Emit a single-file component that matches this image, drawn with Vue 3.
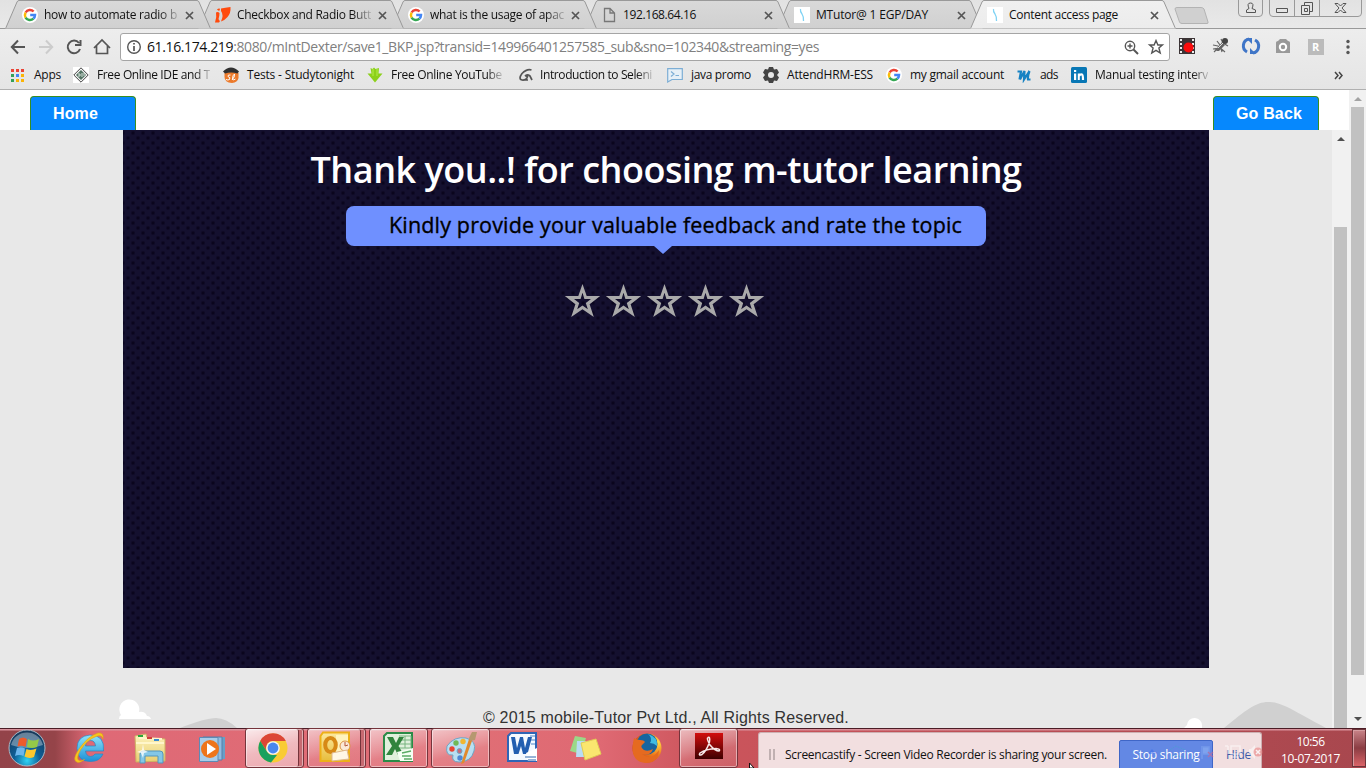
<script setup>
const tabs = [
  { title: 'how to automate radio b', icon: 'google', w: 133, fade: true },
  { title: 'Checkbox and Radio Butt', icon: 'leaf', w: 134, fade: true },
  { title: 'what is the usage of apac', icon: 'google', w: 134, fade: true },
  { title: '192.168.64.16', icon: 'page', w: 73 },
  { title: 'MTutor@ 1 EGP/DAY', icon: 'curve', w: 112 },
  { title: 'Content access page', icon: 'curve', w: 109, active: true },
]
const bookmarks = [
  { title: 'Apps', icon: 'apps', x: 9, gap: 9, w: 27 },
  { title: 'Free Online IDE and T', icon: 'diamond', x: 12, gap: 8, w: 113, fade: true },
  { title: 'Tests - Studytonight', icon: 'study', x: 13, gap: 8, w: 107 },
  { title: 'Free Online YouTube', icon: 'down', x: 13, gap: 8, w: 111, fade: true },
  { title: 'Introduction to Seleni', icon: 'selen', x: 16, gap: 6, w: 112, fade: true },
  { title: 'java promo', icon: 'java', x: 15, gap: 8, w: 60 },
  { title: 'AttendHRM-ESS', icon: 'gear', x: 12, gap: 8, w: 86 },
  { title: 'my gmail account', icon: 'google', x: 13, gap: 8, w: 94 },
  { title: 'ads', icon: 'm', x: 12, gap: 8, w: 18 },
  { title: 'Manual testing interv', icon: 'in', x: 13, gap: 8, w: 113, fade: true },
]
const tasks = [
  { icon: 'start' }, { icon: 'ie' }, { icon: 'folder' }, { icon: 'wmp' },
  { icon: 'chrome', open: true, stack: true, bright: true },
  { icon: 'outlook', open: true, stack: true },
  { icon: 'excel', open: true }, { icon: 'paint', open: true },
  { icon: 'word' }, { icon: 'sticky' }, { icon: 'firefox' }, { icon: 'adobe', open: true },
]
// Spreads a text run to a fixed advance width, whatever the font's own metrics are.
const vFit = (el, { value }) => {
  el.style.letterSpacing = '0px'
  const n = [...el.textContent.trim()].length
  el.style.letterSpacing = (value - el.getBoundingClientRect().width) / n + 'px'
}
</script>

<template>
  <div class="screen">
    <svg class="defs" width="0" height="0">
      <defs>
        <radialGradient id="orb" cx=".5" cy=".85" r=".8"><stop offset="0" stop-color="#2fd3f5" /><stop offset=".45" stop-color="#0e5f97" /><stop offset="1" stop-color="#173a5c" /></radialGradient>
        <linearGradient id="ieg" x1="0" y1="0" x2="0" y2="1"><stop offset="0" stop-color="#8fe4fb" /><stop offset="1" stop-color="#1c8fd6" /></linearGradient>
        <linearGradient id="gold" x1="0" y1="0" x2="0" y2="1"><stop offset="0" stop-color="#fbe9a0" /><stop offset="1" stop-color="#e8bd3c" /></linearGradient>
        <linearGradient id="manila" x1="0" y1="0" x2="0" y2="1"><stop offset="0" stop-color="#fdf3bd" /><stop offset="1" stop-color="#e9cf70" /></linearGradient>
        <linearGradient id="red" x1="0" y1="0" x2="0" y2="1"><stop offset="0" stop-color="#d30d0d" /><stop offset="1" stop-color="#3d0000" /></linearGradient>
        <radialGradient id="fox" cx=".85" cy=".3" r=".9"><stop offset="0" stop-color="#ffe04a" /><stop offset=".5" stop-color="#ee7a1a" /><stop offset="1" stop-color="#c9401b" /></radialGradient>
        <linearGradient id="tabg" x1="0" y1="0" x2="0" y2="1"><stop offset="0" stop-color="#d9d9d9" /><stop offset="1" stop-color="#d0d0d0" /></linearGradient>
        <linearGradient id="taba" x1="0" y1="0" x2="0" y2="1"><stop offset="0" stop-color="#f0f0f0" /><stop offset="1" stop-color="#ececec" /></linearGradient>
        <symbol id="google" viewBox="0 0 16 16"><circle cx="8" cy="8" r="8" fill="#fff" /><g fill="none" stroke-width="2.5"><path d="M3.6 5.5A5 5 0 0 1 11.6 4.5" stroke="#ea4335" /><path d="M3.6 5.5A5 5 0 0 0 3.6 10.5" stroke="#fbbc05" /><path d="M3.6 10.5A5 5 0 0 0 11.4 11.6" stroke="#34a853" /><path d="M11.4 11.6A5 5 0 0 0 13 8.1H8.2" stroke="#4285f4" /></g></symbol>
        <symbol id="leaf" viewBox="0 0 16 16"><path d="M6 1.500Q10 .8 15.500 0Q16 6 12.500 10Q9.500 13.500 6 14.500Q9 8 6 4Z" fill="#ff4a0d" /><path d="M2 2.500Q3.500 1 5 1.700L4.600 3.500Q3 4 2 2.500M1 5.500Q3 4.500 4.500 6Q4.500 9 3.500 12Q4 13.500 5 14L4 15.500H0Q2 10 1 5.500" fill="#ff4a0d" /></symbol>
        <symbol id="page" viewBox="0 0 16 16"><path d="M3.5 1.500H9L13.500 6V14.500H3.500ZM9 1.500V6H13.500" fill="none" stroke="#777" stroke-width="1.3" /></symbol>
        <symbol id="curve" viewBox="0 0 16 16"><path d="M0 0H16V16H0Z" fill="#fff" /><path d="M6.500 2Q6 4.500 8 7Q10 10 9.500 14" fill="none" stroke="#80d3f4" stroke-width="1.3" /></symbol>
        <symbol id="apps" viewBox="0 0 16 16"><path d="M2 2h3v3H2zM7 2h3v3H7zM12 2h3v3h-3z" fill="#ea4335" /><path d="M2 7h3v3H2zM2 12h3v3H2z" fill="#34a058" /><path d="M7 7h3v3H7z" fill="#4285f4" /><path d="M12 7h3v3h-3zM7 12h3v3H7zM12 12h3v3h-3z" fill="#fbb405" /></symbol>
        <symbol id="diamond" viewBox="0 0 16 16"><path d="M0 0H16V16H0Z" fill="#fff" /><path d="M8 .8L15.200 8L8 15.200L.8 8Z" fill="#f4f4f4" stroke="#444" /><path d="M8 3L13 8L8 13L3 8Z" fill="#557565" /><path d="M5 7h2v2H5M9 6v4M11 6v3" stroke="#dce8e0" fill="none" /></symbol>
        <symbol id="study" viewBox="0 0 16 16"><path d="M1.500 6Q8 4 15.500 6V11Q14.500 15.500 9 16Q1.500 15.500 1.500 10Z" fill="#ec7a2b" /><path d="M0 4.500Q4 .5 8 .5Q12 .5 16 4.500L14.500 6.500Q8 4.500 2 6.500Z" fill="#303030" /><path d="M7.500 8Q4.500 7.500 5 9.500Q8 10.500 6.500 12.500Q5 13.500 3 12.500M9 13Q12 10 11.500 7Q9.500 8 9.500 12Q10 14 12.500 12" fill="none" stroke="#fff" stroke-width="1" /></symbol>
        <symbol id="down" viewBox="0 0 16 16"><path d="M3.500 1L5.500 2L7 .5L8.500 2L12 1L11.500 6.500H15.500L8 15.500L.5 6.500H4.500Z" fill="#8cd01b" /><path d="M6 2V9M10 2V9" stroke="#b5ed4b" /></symbol>
        <symbol id="selen" viewBox="0 0 16 16"><path d="M13.500 3Q9 1.500 4 6.500Q0 12 4 13Q8.500 13.500 9.500 9.500Q8 8.500 7 9Q9 6.500 12 9L14 13M4 13H10" fill="none" stroke="#555" stroke-width="1.700" /></symbol>
        <symbol id="java" viewBox="0 0 16 16"><path d="M.7 1.700H15.300V12.500H5L.7 15V12.500ZM4 4.500L7 7L4 9.500M8.500 8.500H12" fill="#e7f0f7" stroke="#7daed5" stroke-width="1.200" /></symbol>
        <symbol id="gear" viewBox="0 0 16 16"><path d="M6 0H10L11 2.500L14 2L16 5.500L14 8L16 10.500L14 14L11 13.500L10 16H6L5 13.500L2 14L0 10.500L2 8L0 5.500L2 2L5 2.500Z" fill="#444" /><circle cx="8" cy="8" r="3" fill="#e7e7e7" /></symbol>
        <symbol id="m" viewBox="0 0 16 16"><path d="M1.500 4.500H5L3.500 12.500M4 12.500L8.500 4L8 12.500L13.500 4Q11.500 9 12 12.500H14.500" fill="none" stroke="#1682c3" stroke-width="2.200" /></symbol>
        <symbol id="in" viewBox="0 0 16 16"><rect width="16" height="16" rx="1.500" fill="#0877b5" /><path d="M3 6.500h2.200V13H3zM3 3h2.200v2H3zM6.800 6.500h2V13h-2z" fill="#fff" /><path d="M8 9Q9 7 11 7.500Q12 8 12 13" fill="none" stroke="#fff" stroke-width="2.200" /></symbol>

        <symbol id="start" viewBox="0 0 40 40"><circle cx="20" cy="20" r="18" fill="url(#orb)" stroke="#aab8c5" stroke-width="1" /><path d="M4 17A16.500 16.500 0 0 1 36 17Q20 23 4 17" fill="#fff" opacity=".35" /><path d="M12 11Q16 8 20 11L18.500 19Q15 17 10.500 18.500Z" fill="#ed5b2c" /><path d="M21 11Q26 14 32 11L30 19Q25 21 20 19Z" fill="#94c947" /><path d="M10 20Q14 18.500 18 20.500L16.500 28Q12 26 8 28Z" fill="#6db6ec" /><path d="M19.500 21Q24 23 29.500 20.500L27 29Q22 31 17.500 28.500Z" fill="#fdc72e" /></symbol>
        <symbol id="ie" viewBox="0 0 40 40"><path d="M34.500 23Q36 7 21 7Q8 8 8 20.500Q8.500 33.500 21.500 33.500Q31 33.500 34 26H26Q24.500 28.500 21.500 28.500Q17 28 16.500 23ZM16.500 18Q17 12.500 21.500 12.500Q26 12.500 26.500 18Z" fill="url(#ieg)" fill-rule="evenodd" stroke="#2686c4" stroke-width=".7" /><path d="M9 34.500Q2 33 10 21Q19 8 29 5Q35 4 34 11Q33 6 27 8.500Q18 12 11.500 22Q6.500 31 10 32.500Q13 33 15.500 31.500Q12 34.500 9 34.500" fill="#f7c51f" stroke="#dfa414" stroke-width=".6" /></symbol>
        <symbol id="folder" viewBox="0 0 40 40"><path d="M4 8L15 6L16 10L34 11V33L5 34Z" fill="url(#manila)" stroke="#ceb264" /><path d="M8 10L31 11M5 15H33" stroke="#fff6cb" stroke-width="2" /><path d="M7 7h5v2H7z" fill="#29a53b" /><path d="M16 9h5v2h-5z" fill="#ce403a" /><path d="M23 11h5v2h-5z" fill="#3a8ad0" /><path d="M9 35V26Q9 23 12 23H29Q32 23 32 26V35H27V28H14V35Z" fill="#83c7e7" stroke="#5296bc" /><path d="M12 16L13 22L17 24L13 25L12 30L10 25L6 24L11 22Z" fill="#fff" opacity=".8" /></symbol>
        <symbol id="wmp" viewBox="0 0 40 40"><path d="M14 9H32V31H14Z" fill="#679fc7" /><path d="M10 9H29V32H10Z" fill="#91bce0" stroke="#577fa8" /><path d="M6.500 9.500H25V33.500H6.500Z" fill="#a9cdea" stroke="#5d8ab5" /><circle cx="17" cy="21" r="9" fill="#ee751b" /><path d="M14 15L23 21L14 27Z" fill="#fff" /></symbol>
        <symbol id="chrome" viewBox="0 0 40 40"><circle cx="20" cy="20" r="14.500" fill="#f9cb34" /><path d="M7.200 13A14.500 14.500 0 0 1 32.800 13H20A7 7 0 0 0 13.900 23.500Z" fill="#dc4637" /><path d="M7.200 13L13.900 23.500A7 7 0 0 0 20 27H24L18 34.400A14.500 14.500 0 0 1 7.200 13" fill="#18a15e" /><circle cx="20" cy="20" r="6.800" fill="#f4f4f4" /><circle cx="20" cy="20" r="5.400" fill="#4a87ee" /></symbol>
        <symbol id="outlook" viewBox="0 0 40 40"><path d="M8 4.500H34V33H5.500V8Z" fill="url(#gold)" stroke="#edb018" stroke-width="2" /><path d="M21 7H33V31H21Z" fill="#fff3bd" /><ellipse cx="15.500" cy="17" rx="5.300" ry="7" fill="none" stroke="#d78916" stroke-width="4" /><circle cx="30" cy="18" r="5" fill="#fbe9d8" stroke="#dc9145" /><path d="M30 14V18L33 17" fill="none" stroke="#b5563c" /><path d="M17 25L32 22L34 31L17 33Z" fill="#fff7e5" stroke="#dfb88d" /></symbol>
        <symbol id="excel" viewBox="0 0 40 40"><path d="M8 5H33V33H5V8Z" fill="#dff0dc" stroke="#2b8b47" stroke-width="2" /><path d="M20 8H32V20H20M20 12H32M20 16H32M26 8V20" fill="none" stroke="#77b47e" /><path d="M8 9H14L17 15L20 9H25L19.500 18L25 27H19L16 21L13 27H7L13 18Z" fill="#31843d" /><path d="M18 24L34 20V33H21Z" fill="#f5fff4" /><path d="M23 25L32 23M23 28H32M25 31H33" stroke="#5bac65" stroke-width="1.500" /></symbol>
        <symbol id="paint" viewBox="0 0 40 40"><path d="M6 18Q13 8 25 10Q36 13 33 23Q30 34 18 34Q10 34 12 27Q4 28 6 18Z" fill="#b9dff2" stroke="#6da6c5" /><circle cx="11" cy="21" r="2.700" fill="#ea4434" /><circle cx="15" cy="15" r="2.700" fill="#70b957" /><circle cx="22" cy="13.500" r="2.700" fill="#f1b731" /><circle cx="18.500" cy="23" r="2.500" fill="#c66d7c" stroke="#6da6c5" /><circle cx="19" cy="30" r="2.700" fill="#4f87d4" /><path d="M32 10L23 35L20 36L28 11Z" fill="#e18a2d" /><path d="M28 10L31 4H36L34 12L29 13Z" fill="#b69870" /></symbol>
        <symbol id="word" viewBox="0 0 40 40"><path d="M8 5H33V33H5V8Z" fill="#f4f9ff" stroke="#2f65b5" stroke-width="2" /><path d="M27 8H32M28 12H32M28 16H32" stroke="#87acda" stroke-width="1.500" /><path d="M8 9H12L14 20L17 9H20L22 20L25 9H29L24.500 26H20L18 18L15.500 26H11Z" fill="#225eb0" /><path d="M23 25L34 20V33H25Z" fill="#fff" /><path d="M22 29H33M25 32H33" stroke="#7499c9" stroke-width="1.500" /></symbol>
        <symbol id="sticky" viewBox="0 0 40 40"><path d="M10 8L21 10L16 26L5 23Z" fill="#9bd887" /><path d="M12 13H25V29H11Z" fill="#b9dcf3" /><path d="M16 15L31 11L36 26L20 32Z" fill="#fae66f" stroke="#e1cb54" /></symbol>
        <symbol id="firefox" viewBox="0 0 40 40"><circle cx="20" cy="20" r="14.500" fill="url(#fox)" /><circle cx="20" cy="16" r="10.500" fill="#17659f" /><path d="M21 6Q31 9 30 18Q27 15 23 15Q26 10 21 6" fill="#3fbce2" /><path d="M7 10Q10 12 13 12Q17 12 18 14L15 17Q13 19 17 22Q21 24 26 21Q23 29 15 26Q24 34 32 22Q31 35 19 35Q5 34 5.500 19Q6 14 7 10" fill="#e56a20" /></symbol>
        <symbol id="adobe" viewBox="0 0 40 40"><path d="M6 5H34V31H6Z" fill="url(#red)" /><path d="M18.500 10Q21.500 7.500 20.500 14Q17.500 23 13 26.500Q9 28 11 25Q17 21 27 20.500Q32 21 30 23Q26 23 21 17Q18 12 18.500 10" fill="none" stroke="#f6e8e8" stroke-width="1.500" /></symbol>
      </defs>
    </svg>

    <header class="chrome">
      <div class="strip">
        <div v-for="(t, i) in tabs" :key="i" class="tab" :class="['t' + i, { active: t.active }]">
          <svg class="shape" width="206" height="29" viewBox="0 0 206 29">
            <path d="M0 28.500L1 27.500L12 2Q12.700.5 14 .5H192Q193.300.5 194 2L205 27.500L206 28.500" :fill="t.active ? 'url(#taba)' : 'url(#tabg)'" stroke="#999" />
          </svg>
          <svg class="fav" width="16" height="16"><use :href="'#' + t.icon" /></svg>
          <div class="ttl" :class="{ fade: t.fade }"><span v-fit="t.w">{{ t.title }}</span></div>
          <svg class="x" width="9" height="9"><path d="M1 1L8 8M8 1L1 8" stroke="#555" stroke-width="1.700" /></svg>
        </div>
        <svg class="newtab" width="36" height="18"><path d="M1 2Q1 .5 3 .5H27Q29 .5 30 2L34 15Q34.500 16.500 33 16.500H8Q6 16.500 5.500 15Z" fill="#d0d0d0" stroke="#b3b3b3" /></svg>
        <svg class="wins" width="126" height="18" fill="none" stroke="#999">
          <path d="M.5 0V13Q.5 16.500 4 16.500H21Q24.500 16.500 24.500 13V0M31.500 0V13Q31.500 16.500 35 16.500H120Q123.500 16.500 123.500 13V0M56.500 0V16M81.500 0V16" />
          <g stroke="#555"><path d="M8.500 12.500V10L11 8.500Q8.500 3 12.500 3Q16.500 3 14 8.500L17.500 10V12.500ZM38.500 8.500H49.500V12.500H38.500ZM63.500 5.500H71.500V14.500H63.500ZM66.500 8.500H69.500V11.500H66.500ZM66.500 5.500V2.500H74.500V11.500H71.500" /><path d="M97 3.500H100L102.500 6L105 3.500H108L104 8L108 12.500H105L102.500 10L100 12.500H97L101 8Z" /></g>
        </svg>
      </div>
      <div class="toolbar">
        <svg class="nav" width="115" height="28" fill="none" stroke="#555" stroke-width="2">
          <path d="M25 14H12M18 7.500L11.800 14L18 20.500" /><path d="M39 14H52M46 7.500L52.200 14L46 20.500" stroke="#ccc" /><path d="M79 10A6.300 6.300 0 1 0 80 16M80.500 7V12H75" /><path d="M94 15L102 7L110 15M96.500 13V20.500H107.500V13" stroke-width="1.700" />
        </svg>
        <div class="omni">
          <svg width="16" height="16" fill="none" stroke="#555" stroke-width="1.400"><circle cx="8" cy="8" r="6.300" /><path d="M8 7V12M8 4V5.500" stroke-width="1.700" /></svg>
          <p v-fit="672" class="url"><b>61.16.174.219</b>:8080/mIntDexter/save1_BKP.jsp?transid=149966401257585_sub&amp;sno=102340&amp;streaming=yes</p>
          <svg class="zoomstar" width="42" height="18" fill="none" stroke="#555" stroke-width="1.400"><circle cx="7" cy="8" r="4.700" /><path d="M10.500 11.500L15 16" stroke-width="2" /><path d="M4.500 8H9.500M7 5.500V10.500M33 2.500L34.900 7H39.400L35.900 10L37.200 15L33 12.300L28.800 15L30.100 10L26.600 7H31.100Z" /></svg>
        </div>
        <svg class="ext" width="190" height="26">
          <path d="M8 5H24V21H8Z" fill="#3c3436" /><path d="M10 6V20M22 6V20" stroke="#eee" stroke-width="2" stroke-dasharray="2 2" /><circle cx="17.500" cy="14.500" r="5" fill="#fa0c0c" />
          <path d="M43 19L52 10M42 12L47 13L54 19M46 8L49 12L51 19M50 6L52 10L57 13M42 16L48 15" fill="none" stroke="#666" stroke-width="1.200" /><path d="M45 18L51 9L54 12L48 18Z" fill="#666" /><circle cx="54" cy="8" r="3" fill="#444" /><path d="M47 15L52 10" stroke="#ddd" />
          <path d="M76 19A7 7 0 0 1 78 6M84 7A7 7 0 0 1 82 20" fill="none" stroke="#3f75c7" stroke-width="3" /><path d="M75 5H81V11ZM79 21V15L85 21Z" fill="#3f75c7" />
          <path d="M105 9.500Q105 8 107 8L109 6H115L117 8Q119 8 119 9.500V20H105Z" fill="#999" /><circle cx="112" cy="14" r="3.200" fill="#999" stroke="#fff" stroke-width="2" />
          <rect x="137" y="6" width="16" height="16" fill="#bbb" /><text x="141" y="18" class="r">R</text>
          <g fill="#555"><circle cx="177" cy="8.500" r="1.700" /><circle cx="177" cy="14" r="1.700" /><circle cx="177" cy="19.500" r="1.700" /></g>
        </svg>
      </div>
      <nav class="marks">
        <div v-for="b in bookmarks" :key="b.title" class="mark" :style="{ marginLeft: b.x + 'px', gap: b.gap + 'px' }">
          <svg width="16" height="16"><use :href="'#' + b.icon" /></svg>
          <div :class="{ fade: b.fade }"><span v-fit="b.w">{{ b.title }}</span></div>
        </div>
        <svg class="more" width="10" height="9" fill="none" stroke="#444" stroke-width="1.500"><path d="M1 1L4 4.500L1 8M5 1L8 4.500L5 8" /></svg>
      </nav>
    </header>

    <main class="page">
      <div class="content">
        <div class="top"><button class="btn"><span v-fit="45">Home</span></button><button class="btn back"><span v-fit="66">Go Back</span></button></div>
        <div class="frame">
          <div class="body">
            <section class="panel">
              <h1><span v-fit="711">Thank you..! for choosing m-tutor learning</span></h1>
              <div class="tip"><span v-fit="573">Kindly provide your valuable feedback and rate the topic</span></div>
              <div class="stars">
                <svg v-for="n in 5" :key="n" width="41" height="41" viewBox="0 0 41 41"><path fill-rule="evenodd" fill="#aaa" d="M20.500 3L24.700 15H38.200L27.600 23.300L31.800 36L20.500 28.300L9.200 36L13.400 23.300L2.800 15H16.300ZM20.500 11.800L18.600 17.900H12L17.200 21.900L15.200 28.300L20.500 24.500L25.800 28.300L23.800 21.900L29 17.900H22.400Z" /></svg>
              </div>
            </section>
            <footer>
              <svg class="scene" width="1332" height="60">
                <path d="M180 60Q205 50 216 50Q226 50 237 60ZM1224 60C1246 42 1256 34 1268 34C1282 34 1292 42 1326 60Z" fill="#d0d0d0" />
                <path d="M119 51Q119 48 121 47A10 10 0 1 1 139 44Q145 43 147 48Q150 48 151 51ZM1184 60L1187 57A7.500 7.500 0 1 1 1202 58V60Z" fill="#fff" />
              </svg>
              <p><span v-fit="366">© 2015 mobile-Tutor Pvt Ltd., All Rights Reserved.</span></p>
            </footer>
          </div>
          <div class="bar inner"><i class="up" /><div class="thumb" /></div>
        </div>
      </div>
      <div class="bar outer"><i class="up pale" /><div class="thumb" /><i class="dn" /></div>
    </main>

    <div class="taskbar">
      <div v-for="t in tasks" :key="t.icon" class="cell">
        <div class="tb" :class="{ open: t.open, stack: t.stack, bright: t.bright }"><svg width="40" height="40"><use :href="'#' + t.icon" /></svg></div>
      </div>
      <div class="clock"><span v-fit="28">10:56</span><span v-fit="59">10-07-2017</span></div>
      <div class="desk" />
      <div class="share">
        <i class="grip" />
        <span v-fit="322" class="msg">Screencastify - Screen Video Recorder is sharing your screen.</span>
        <button><span v-fit="67">Stop sharing</span></button>
        <span v-fit="25" class="hide">Hide</span>
        <svg class="tray" width="160" height="35"><path d="M46 17L50 12L54 17Z" fill="#386bed" /><path d="M68 13L74 9L83 13M70 18L82 20" stroke="#3eaac7" fill="none" stroke-dasharray="2 1" /><path d="M100 9V22M101 10H107V17H101" stroke="#87adf4" stroke-width="1.500" fill="#9abdf8" /><path d="M106 15L111 20M111 15L106 20" stroke="#e6607d" stroke-width="1.500" /><path d="M129 9H138V17H129ZM126 9V17M123 9H126M133 17V20M129 20H137" fill="none" stroke="#fff" stroke-width="1.500" /><path d="M147 12H149L153 8V22L149 18H147Z" fill="#fff" /></svg>
      </div>
      <svg class="mute" width="12" height="12"><circle cx="6" cy="6" r="4.500" fill="#e98282" /><path d="M4 4L8 8M8 4L4 8" stroke="#fff" stroke-width="1.500" /></svg>
      <svg class="cursor" width="6" height="5"><path d="M.5 0V5H5Z" fill="#fff" stroke="#111" /></svg>
    </div>
  </div>
</template>

<style>
html, body { margin: 0; overflow: hidden; }
</style>
<style scoped>
* { box-sizing: border-box; }
svg { display: block; flex: none; }
p, h1 { margin: 0; }
.screen { position: relative; width: 1366px; height: 768px; overflow: hidden; display: flex; flex-direction: column; font: 12px/16px "Open Sans", "Noto Sans", sans-serif; color: #111; white-space: nowrap; }
.defs { position: absolute; }
.chrome { height: 90px; flex: none; background: linear-gradient(#e2e2e2 0, #e9e9e9 28px, #ededed 29px, #e5e5e5 89px); border-bottom: 1px solid #b0b0b0; }
.strip { position: relative; height: 29px; display: flex; padding-left: 5px; box-shadow: inset 0 -1px #999; }
.tab { position: relative; width: 206px; height: 29px; margin-right: -13px; display: flex; align-items: center; padding: 1px 0 0 17px; flex: none; }
.t0 { z-index: 6; } .t1 { z-index: 5; } .t2 { z-index: 4; } .t3 { z-index: 3; } .t4 { z-index: 2; } .active { z-index: 7; }
.shape { position: absolute; left: 0; top: 0; }
.fav, .ttl, .x { position: relative; }
.ttl { width: 134px; margin-left: 6px; overflow: hidden; }
.x { margin-left: 7px; }
.fade { overflow: hidden; mask-image: linear-gradient(90deg, #000 86%, #0003); }
.newtab { margin: 7px 0 0 11px; }
.wins { margin-left: 28px; }
.toolbar { display: flex; height: 33px; padding-top: 4px; }
.nav { margin-right: 5px; }
.omni { width: 1050px; height: 28px; background: #fff; border: 1px solid #a5a5a5; border-radius: 3px; display: flex; align-items: center; padding-left: 5px; }
.url { font-size: 14px; color: #808080; margin-left: 5px; width: max-content; }
.url b { font-weight: 400; color: #111; }
.zoomstar { margin-left: auto; margin-right: 4px; }
.ext { margin-left: 1px; }
.r { font: bold 11px "Open Sans", sans-serif; fill: #fff; }
.marks { height: 26px; display: flex; align-items: center; }
.mark { display: flex; align-items: center; }
.more { margin-left: auto; margin-right: 22px; }
.page { height: 638px; display: flex; background: #fff; }
.content { width: 1349px; display: flex; flex-direction: column; }
.top { height: 40px; display: flex; justify-content: space-between; padding: 6px 30px 0; }
.btn { width: 106px; height: 34px; border: 1px solid #388e20; border-bottom: 0; border-radius: 4px 4px 0 0; background: #0688fd; color: #fff; font: bold 16px "Liberation Sans", Arial, sans-serif; padding: 0 0 0 22px; text-align: left; }
.frame { display: flex; flex: 1; background: #e8e8e8; }
.body { width: 1332px; overflow: hidden; }
.panel { width: 1086px; height: 538px; margin-left: 123px; background-color: #14102f; background-image: radial-gradient(circle, #080319cc .8px, transparent 2.600px), radial-gradient(circle, #080319cc .8px, transparent 2.600px); background-size: 10px 10px; background-position: -5px -2px, 0 3px; display: flex; flex-direction: column; align-items: center; }
h1 { font-size: 36px; line-height: 48px; font-weight: 600; color: #fff; margin-top: 16px; height: 48px; }
.tip { position: relative; width: 640px; height: 40px; margin-top: 12px; border-radius: 8px; background: #6f90ff; color: #000; font-size: 21.500px; -webkit-text-stroke: .35px #000; line-height: 38px; padding-left: 43px; }
.tip::after { content: ""; position: absolute; left: 308px; top: 40px; border: 9px solid transparent; border-top: 8px solid #6f90ff; border-bottom: 0; }
.stars { display: flex; margin: 35px 3px 0 0; }
footer { position: relative; height: 60px; }
.scene { position: absolute; left: 0; top: 0; }
footer p { position: relative; padding-top: 41px; text-align: center; font: 16px/18px "Liberation Sans", Arial, sans-serif; color: #333; }
.bar { position: relative; width: 17px; background: #f1f1f1; display: flex; flex-direction: column; align-items: center; }
.thumb { width: 13px; background: #c1c1c1; }
.up, .dn { border: 4px solid transparent; width: 0; height: 0; }
.up { border-top: 0; border-bottom-color: #505050; margin-top: 7px; }
.pale { border-bottom-color: #a3a3a3; }
.dn { border-bottom: 0; border-top-color: #505050; margin-top: 42px; }
.inner .thumb { height: 501px; margin-top: 86px; }
.outer .thumb { height: 568px; margin-top: 6px; }
.taskbar { position: relative; height: 40px; display: flex; background: linear-gradient(#4a1c25 0 1px, #d9919b 1px 2px, transparent 3px), linear-gradient(90deg, #934349 0, #954449 55px, #df6976 90px, #e06e75 480px, #df6973 600px, #cc555c 700px, #bb4e55 1000px, #a8474e 1366px); }
.cell { width: 62px; height: 40px; flex: none; display: flex; justify-content: center; padding-right: 1px; }
.cell:first-child { margin-left: -4px; }
.tb { width: 59px; height: 40px; display: flex; justify-content: center; }
.open { border: 1px solid #75343b; border-radius: 3px; background: linear-gradient(165deg, #fff9 0, #fff4 45%, #fff2 60%, #fff1); box-shadow: inset 0 0 0 1px #fff7; }
.open svg { margin-top: -1px; }
.stack { padding-right: 4px; box-shadow: inset 0 0 0 1px #fff7, inset -4px 0 #c76a71, inset -5px 0 #75343b; }
.bright { background: linear-gradient(165deg, #fffd 0, #fff8 50%, #fff6); }
.clock { position: absolute; left: 1270px; top: 5px; width: 81px; display: flex; flex-direction: column; align-items: center; color: #fff; line-height: 17px; }
.desk { position: absolute; right: 0; top: 1px; width: 14px; height: 38px; border: 1px solid #6d343a; box-shadow: inset 1px 1px #d59ca0; background: linear-gradient(#c98489, #8b3d43 50%, #da6468); }
.share { position: absolute; left: 758px; top: 4px; width: 504px; height: 36px; background: #f2dfe0; border: 1px solid #cdb0b2; border-bottom: 0; border-radius: 3px 3px 0 0; display: flex; align-items: flex-start; }
.grip { width: 6px; height: 11px; margin: 16px 10px 0 10px; border: solid #c0b0b1; border-width: 0 2px; }
.msg { margin-top: 14px; }
.share button { width: 94px; height: 29px; margin: 7px 13px 0 12px; background: #6388e4; border: 1px solid #3f66c7; color: #fff; border-radius: 2px 2px 0 0; font: 12px/16px "Open Sans", sans-serif; padding: 0; }
.hide { margin-top: 14px; color: #3d5ba9; }
.tray { position: absolute; left: 343px; top: 4px; opacity: .5; }
.mute { position: absolute; left: 1252px; top: 18px; opacity: .6; }
.cursor { position: absolute; left: 749px; top: 35px; }
</style>
